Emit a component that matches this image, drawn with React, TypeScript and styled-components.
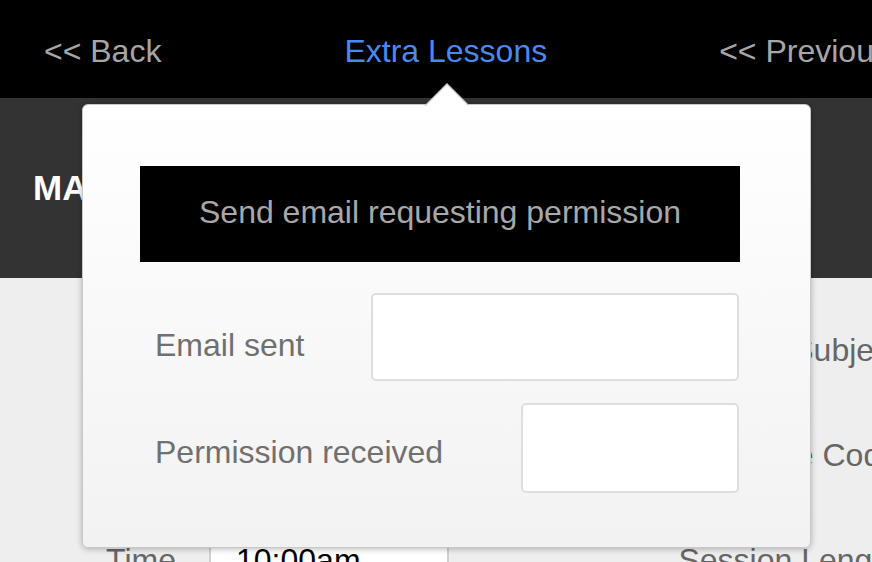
import React from 'react';
import styled, { createGlobalStyle } from 'styled-components';

const GlobalStyle = createGlobalStyle`
  html, body {
    margin: 0;
    padding: 0;
    background: #eeeeee;
    font-family: "Liberation Sans", Arial, sans-serif;
    overflow: hidden;
  }
`;

const Page = styled.div`
  position: relative;
  width: 872px;
  height: 562px;
  overflow: hidden;
  background: #eeeeee;
`;

const NavBar = styled.nav`
  display: flex;
  align-items: center;
  height: 98px;
  padding-left: 44px;
  background: #000;
  white-space: nowrap;
`;

const NavLink = styled.a<{ $gap?: number; $active?: boolean }>`
  margin-left: ${({ $gap }) => $gap ?? 0}px;
  font-size: 32px;
  line-height: 1;
  color: ${({ $active }) => ($active ? '#4a8af0' : '#a6a6a6')};
  text-decoration: none;
  padding-top: 4px;
`;

const Banner = styled.header`
  display: flex;
  align-items: center;
  height: 180px;
  padding-left: 33px;
  background: #333333;
`;

const BannerTitle = styled.h1`
  margin: 0;
  font-size: 35px;
  font-weight: bold;
  color: #fff;
  white-space: nowrap;
`;

const Form = styled.div`
  display: grid;
  grid-template-columns: 176px 240px 417px 240px;
  grid-auto-rows: 90px;
  column-gap: 33px;
  row-gap: 15px;
  padding-top: 27px;
  width: 1200px;
`;

const Label = styled.label`
  align-self: center;
  text-align: right;
  font-size: 32px;
  color: #666;
  white-space: nowrap;
`;

const Field = styled.div`
  display: flex;
  align-items: center;
  padding-left: 25px;
  background: #fff;
  border: 2px solid #cfcfcf;
  font-size: 32px;
  color: #000;
`;

const Popover = styled.div`
  position: absolute;
  left: 82px;
  top: 104px;
  width: 729px;
  height: 444px;
  padding: 61px 70px 0 57px;
  box-sizing: border-box;
  border: 1px solid #c8c8c8;
  border-radius: 6px;
  background: linear-gradient(to bottom, #ffffff, #f2f2f2);
  box-shadow: 0 1px 6px rgba(0, 0, 0, 0.28);
`;

const Arrow = styled.div`
  position: absolute;
  top: -22px;
  left: 342px;
  width: 43px;
  height: 23px;
  overflow: hidden;

  &::after {
    content: '';
    position: absolute;
    left: 6px;
    top: 7px;
    width: 30px;
    height: 30px;
    background: #fff;
    border: 1px solid #c8c8c8;
    transform: rotate(45deg);
  }
`;

const SendButton = styled.button`
  display: block;
  width: 600px;
  height: 96px;
  border: none;
  background: #000;
  color: #a8a8a8;
  font-family: inherit;
  font-size: 32px;
  padding: 0 0 3px;
`;

const Row = styled.div<{ $top: number }>`
  display: flex;
  align-items: center;
  justify-content: space-between;
  width: 599px;
  margin-top: ${({ $top }) => $top}px;
  padding-left: 15px;
  box-sizing: border-box;
`;

const RowLabel = styled.span<{ $drop: number }>`
  font-size: 32px;
  color: #707070;
  padding-top: ${({ $drop }) => $drop}px;
`;

const TextBox = styled.input<{ $w: number; $h: number }>`
  width: ${({ $w }) => $w}px;
  height: ${({ $h }) => $h}px;
  box-sizing: border-box;
  border: 2px solid #dedede;
  border-radius: 5px;
  background: #fff;
  outline: none;
`;

export default function App() {
  return (
    <>
      <GlobalStyle />
      <Page>
        <NavBar>
          <NavLink>&lt;&lt; Back</NavLink>
          <NavLink $gap={183} $active>Extra Lessons</NavLink>
          <NavLink $gap={172}>&lt;&lt; Previous</NavLink>
        </NavBar>
        <Banner>
          <BannerTitle>MAKE-UP</BannerTitle>
        </Banner>
        <Form>
          <Label>Date</Label>
          <Field>12/05</Field>
          <Label>Subject</Label>
          <Field />
          <Label>Tutor</Label>
          <Field />
          <Label>Course Code</Label>
          <Field />
          <Label>Time</Label>
          <Field>10:00am</Field>
          <Label>Session Length</Label>
          <Field />
        </Form>
        <Popover>
          <Arrow />
          <SendButton>Send email requesting permission</SendButton>
          <Row $top={31}>
            <RowLabel $drop={16}>Email sent</RowLabel>
            <TextBox $w={368} $h={88} />
          </Row>
          <Row $top={22}>
            <RowLabel $drop={8}>Permission received</RowLabel>
            <TextBox $w={218} $h={90} />
          </Row>
        </Popover>
      </Page>
    </>
  );
}
